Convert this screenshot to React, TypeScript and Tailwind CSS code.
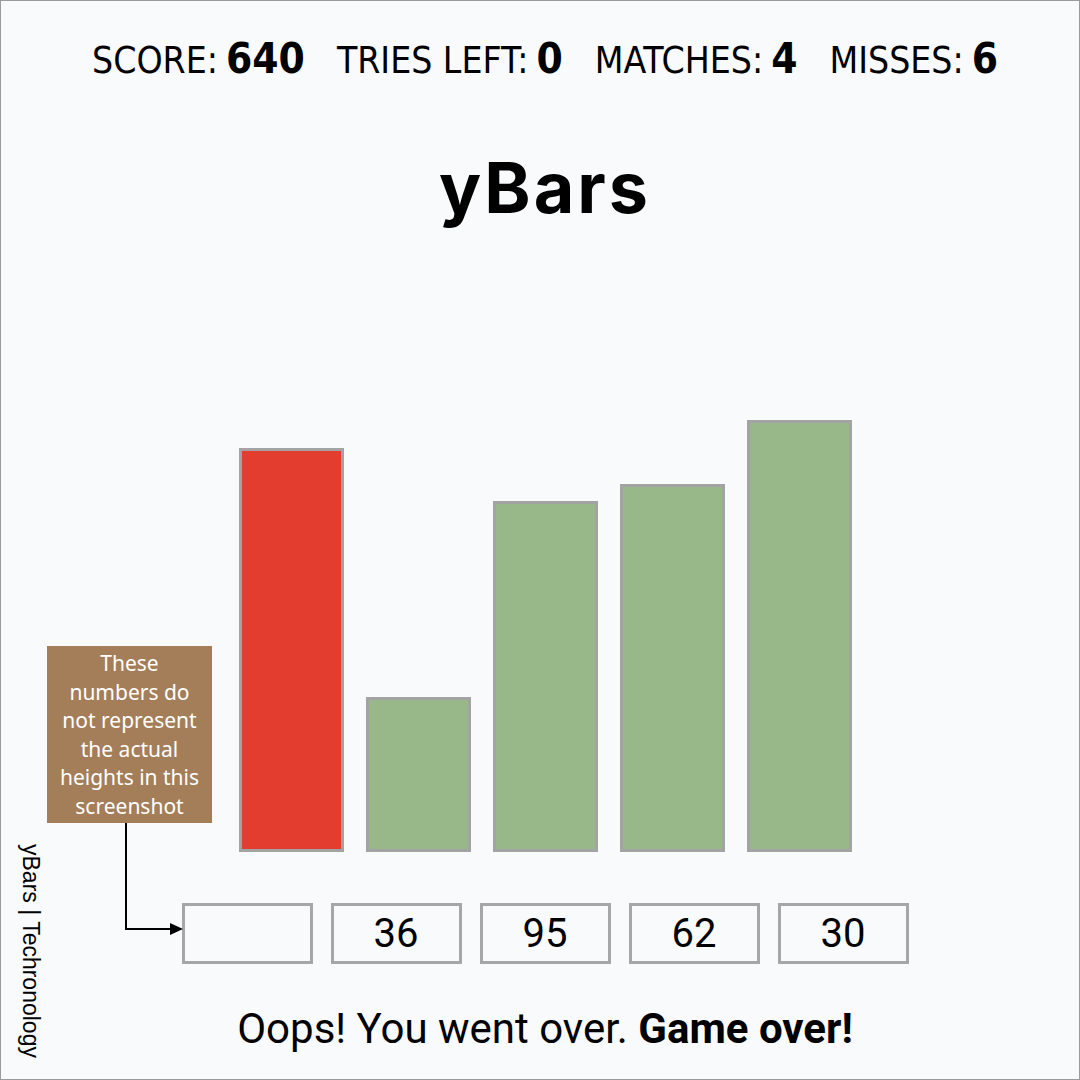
import React from "react";

type Bar = {
  height: number;
  guess: string;
  over?: boolean;
};

const bars: Bar[] = [
  { height: 404, guess: "", over: true },
  { height: 155, guess: "36" },
  { height: 351, guess: "95" },
  { height: 368, guess: "62" },
  { height: 432, guess: "30" },
];

const stats = [
  { label: "SCORE:", value: "640" },
  { label: "TRIES LEFT:", value: "0" },
  { label: "MATCHES:", value: "4" },
  { label: "MISSES:", value: "6" },
];

const Scoreboard = () => (
  <div className="flex items-baseline gap-[32px] font-['DejaVu_Sans_Condensed','DejaVu_Sans',sans-serif] text-[37px] leading-none text-black">
    {stats.map((s) => (
      <div key={s.label} className="flex items-baseline gap-[8px]">
        <span>{s.label}</span>
        <span className="font-bold text-[42px]">{s.value}</span>
      </div>
    ))}
  </div>
);

const Note = () => (
  <>
    <div className="absolute left-[46px] top-[645px] w-[165px] h-[177px] bg-[#a47e59] pt-[3px] text-center text-white font-['Noto_Sans',sans-serif] text-[21px] leading-[28.6px]">
      These
      <br />
      numbers do
      <br />
      not represent
      <br />
      the actual
      <br />
      heights in this
      <br />
      screenshot
    </div>
    <svg
      className="absolute left-[115px] top-[822px]"
      width="72"
      height="116"
      viewBox="0 0 72 116"
    >
      <path d="M10 0 V106 H56" fill="none" stroke="#000" strokeWidth="2" />
      <path d="M54 100 L67 106 L54 112 Z" fill="#000" />
    </svg>
  </>
);

export default function App() {
  return (
    <div className="relative w-[1080px] h-[1080px] border border-[#9a9a9a] bg-[#f9fafb] flex flex-col items-center pl-[10px] text-black">
      <div className="mt-[37px]">
        <Scoreboard />
      </div>

      <h1 className="mt-[73px] font-['Inter',sans-serif] font-bold text-[70px] tracking-[3px] leading-none">
        yBars
      </h1>

      <div className="mt-[197px] h-[432px] flex items-end gap-[22px]">
        {bars.map((b, i) => (
          <div
            key={i}
            className={`w-[105px] border-[3px] border-[#a3a3a3] ${
              b.over ? "bg-[#e23d2f]" : "bg-[#98b88a]"
            }`}
            style={{ height: b.height }}
          />
        ))}
      </div>

      <div className="mt-[51px] flex gap-[18px]">
        {bars.map((b, i) => (
          <div
            key={i}
            className="w-[131px] h-[61px] border-[3px] border-[#a6a6a6] flex items-center justify-center font-['Liberation_Sans_Narrow','Roboto',sans-serif] text-[40px] leading-none"
          >
            {b.guess}
          </div>
        ))}
      </div>

      <p className="mt-[44px] font-['Roboto',sans-serif] text-[42px] leading-none">
        Oops! You went over. <span className="font-bold">Game over!</span>
      </p>

      <Note />

      <div className="absolute left-[18px] top-[843px] [writing-mode:vertical-rl] font-['Liberation_Sans',sans-serif] text-[23px] leading-none">
        yBars | Techronology
      </div>
    </div>
  );
}
